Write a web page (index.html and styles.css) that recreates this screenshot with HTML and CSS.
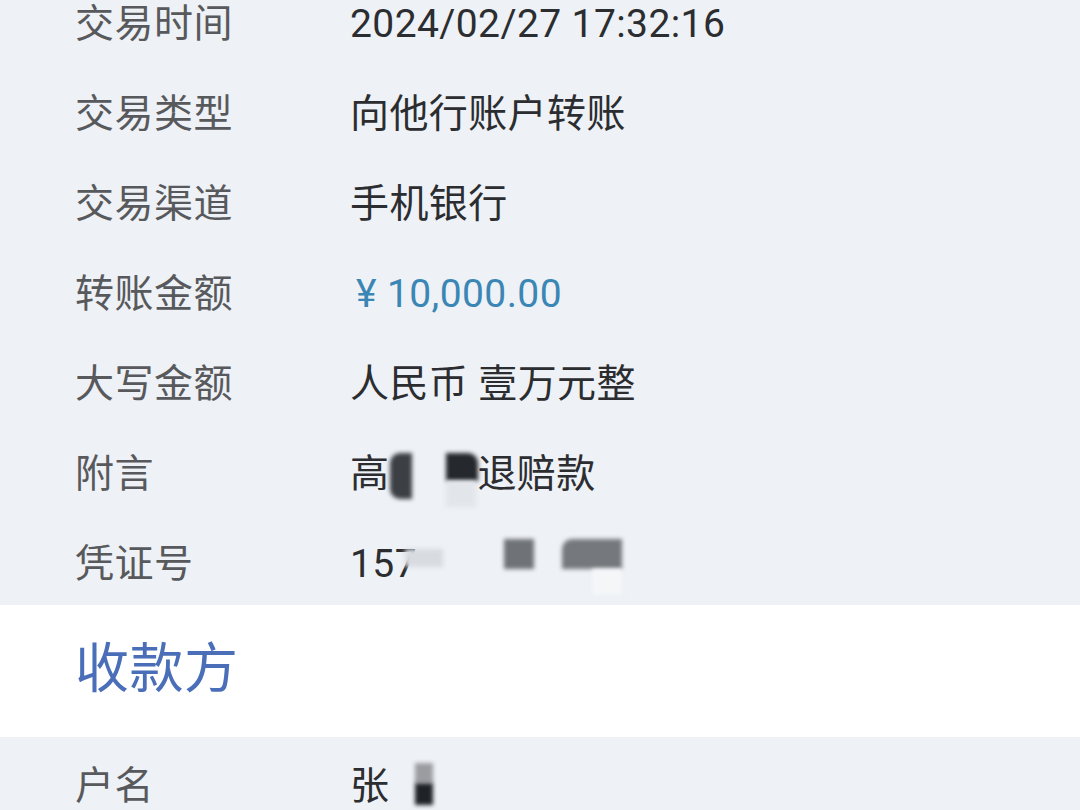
FILE: index.html
```html
<!DOCTYPE html>
<html lang="zh-CN">
<head>
<meta charset="utf-8">
<link rel="stylesheet" href="styles.css">
</head>
<body>
<div class="page">
  <section class="details first">
    <div class="row"><span class="label">交易时间</span><span class="value">2024/02/27 17:32:16</span></div>
    <div class="row"><span class="label">交易类型</span><span class="value">向他行账户转账</span></div>
    <div class="row"><span class="label">交易渠道</span><span class="value">手机银行</span></div>
    <div class="row"><span class="label">转账金额</span><span class="value amount">¥ 10,000.00</span></div>
    <div class="row"><span class="label">大写金额</span><span class="value">人民币 壹万元整</span></div>
    <div class="row"><span class="label">附言</span><span class="value masked">高<span class="gap g1"></span>退赔款<span class="blur b1"></span><span class="blur b2"></span><span class="blur b3"></span></span></div>
    <div class="row"><span class="label">凭证号</span><span class="value masked">157<span class="gap g2"></span><span class="blur c1"></span><span class="blur c2"></span><span class="blur c3"></span><span class="blur c4"></span></span></div>
  </section>
  <section class="heading">
    <h2>收款方</h2>
  </section>
  <section class="details last">
    <div class="row"><span class="label">户名</span><span class="value masked">张<span class="gap g3"></span><span class="blur d1"></span><span class="blur d2"></span></span></div>
  </section>
</div>
</body>
</html>
```

FILE: styles.css
```css
html, body {
  margin: 0;
  padding: 0;
  background: #eef1f5;
  overflow: hidden;
}
.page {
  width: 1080px;
  height: 810px;
  overflow: hidden;
  font-family: Roboto, "Noto Sans CJK SC", sans-serif;
}
.details {
  background: #eef1f5;
  padding-left: 75px;
}
.details.first {
  margin-top: -25px;
}
.row {
  display: flex;
  align-items: center;
  height: 90px;
  box-sizing: border-box;
  padding-top: 8px;
  line-height: 1.2;
}
.label {
  width: 275px;
  flex: none;
  font-size: 39px;
  color: #58595c;
  letter-spacing: 0.5px;
}
.value {
  font-size: 39px;
  color: #2b2d30;
  letter-spacing: 0.4px;
}
.amount {
  color: #3a86b4;
  margin-left: 6px;
}
.masked {
  position: relative;
  display: inline-flex;
  align-items: center;
}
.gap { display: inline-block; }
.g1 { width: 88px; }
.g2 { width: 210px; }
.g3 { width: 40px; }
.blur {
  position: absolute;
  filter: blur(2px);
}
.b1 { left: 40px; top: 2px; width: 22px; height: 46px; background: #3c3f44; border-radius: 10px 0 0 10px; }
.b2 { left: 96px; top: 2px; width: 32px; height: 28px; background: #25282d; border-radius: 0 10px 0 0; }
.b3 { left: 96px; top: 30px; width: 30px; height: 26px; background: #e2e5ea; }
.c1 { left: 55px; top: 8px; width: 38px; height: 18px; background: #d8dbe0; }
.c2 { left: 154px; top: -2px; width: 30px; height: 30px; background: #6f7276; }
.c3 { left: 212px; top: -2px; width: 60px; height: 30px; background: #75787c; border-radius: 10px 0 0 0; }
.c4 { left: 242px; top: 28px; width: 30px; height: 26px; background: #f4f6f8; }
.d1 { left: 65px; top: 0px; width: 18px; height: 20px; background: #9a9ca0; }
.d2 { left: 65px; top: 20px; width: 18px; height: 22px; background: #1f2226; }
.heading {
  background: #ffffff;
  height: 132px;
  display: flex;
  align-items: center;
  padding-left: 75px;
  box-sizing: border-box;
  padding-bottom: 2px;
}
.heading h2 {
  margin: 0;
  font-size: 54px;
  line-height: 1.2;
  font-weight: 400;
  color: #4a6fb8;
  letter-spacing: 0.5px;
}
```
